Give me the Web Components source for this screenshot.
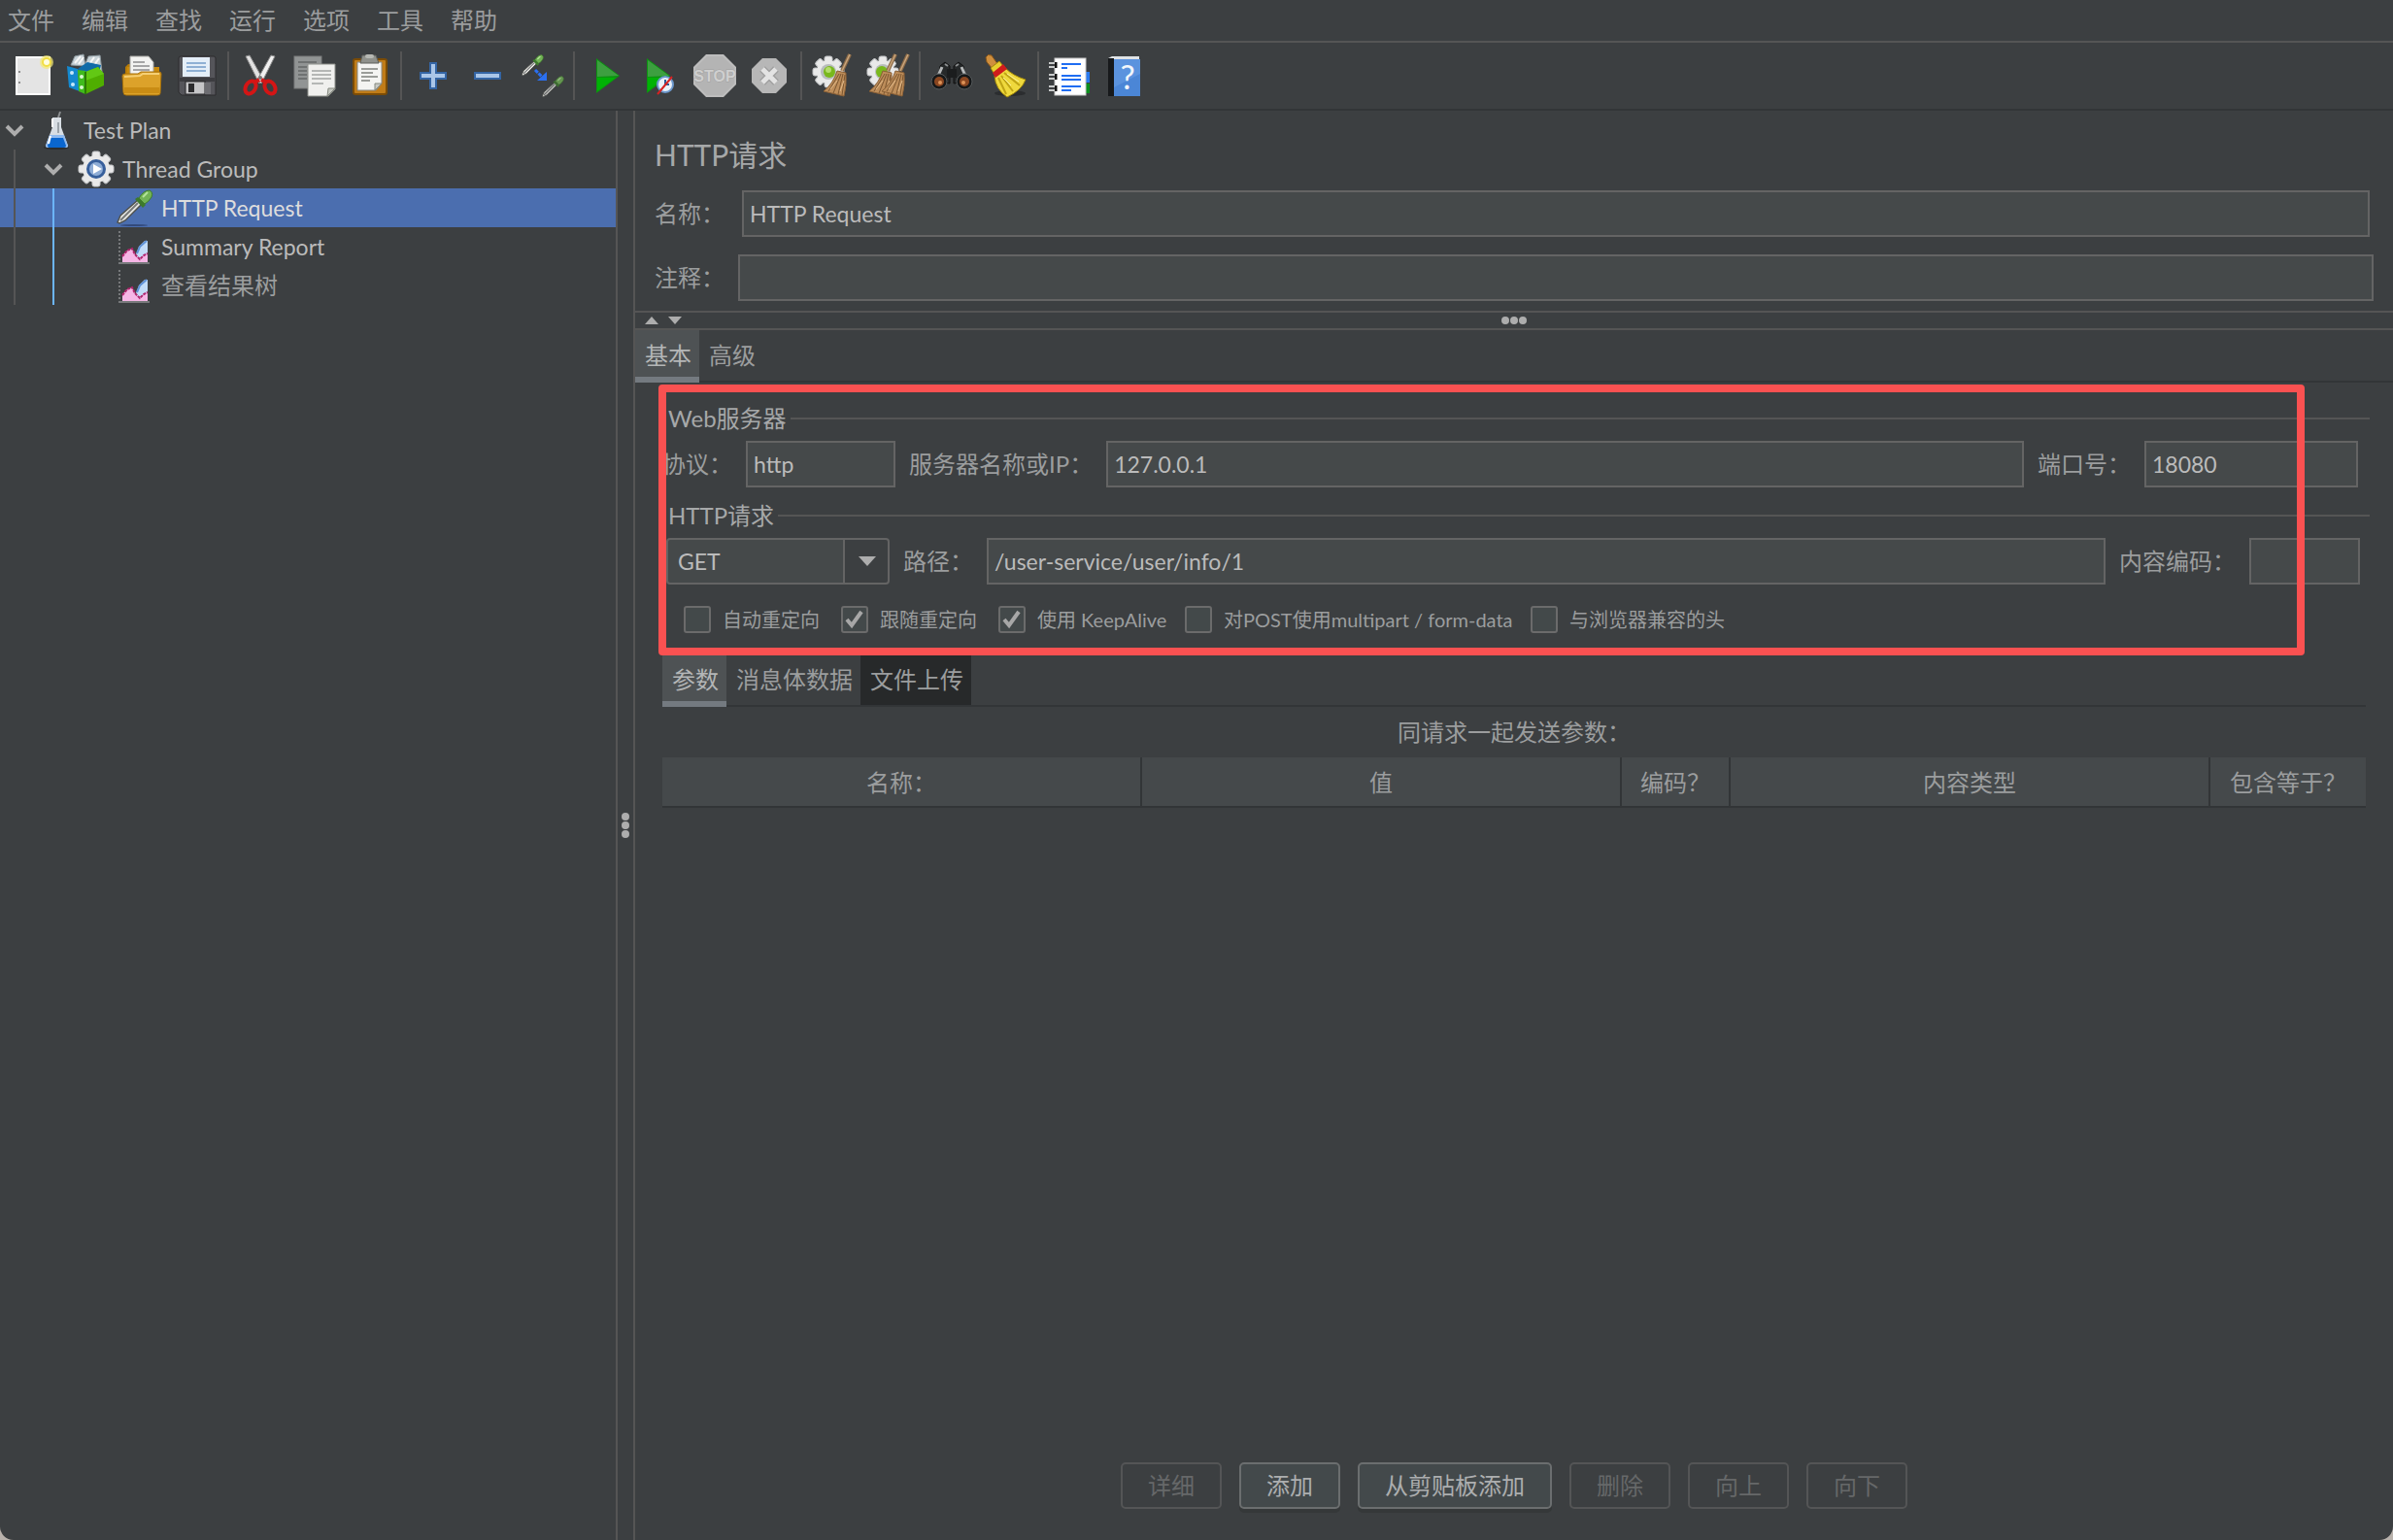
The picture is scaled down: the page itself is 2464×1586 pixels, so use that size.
<!DOCTYPE html>
<html lang="zh-CN">
<head>
<meta charset="utf-8">
<title>HTTP请求</title>
<style>
  html, body {
    margin: 0;
    height: 100%;
    background: #b9b2ac;
  }
  body {
    --bg: #3c3f41;
    --line: #555555;
    --dark-line: #323537;
    --field: #45494a;
    --field-border: #646464;
    --text: #bbbbbb;
    --cjk: #9b9d9e;
    font-family: Lato, "Noto Sans CJK SC", sans-serif;
    font-size: 24px;
    line-height: 32px;
    color: var(--cjk);
  }
</style>
</head>
<body>
<app-window>
  <menu-bar slot="menu" items='["文件","编辑","查找","运行","选项","工具","帮助"]'></menu-bar>
  <tool-bar slot="tools"></tool-bar>
  <test-tree slot="tree">
    <tree-row depth="0" icon="flask" open>Test Plan</tree-row>
    <tree-row depth="1" icon="gear" open>Thread Group</tree-row>
    <tree-row depth="2" icon="pipette" selected>HTTP Request</tree-row>
    <tree-row depth="2" icon="chart">Summary Report</tree-row>
    <tree-row depth="2" icon="chart" cjk>查看结果树</tree-row>
  </test-tree>
  <http-editor slot="editor"></http-editor>
</app-window>

<script>
const base = `
  :host, *, *:before, *:after { box-sizing: border-box; }
  button, input, select { font: inherit; color: inherit; margin: 0; }
  button { background: none; border: 0; padding: 0; }
`;

const pipette = (x, y, s) => `
  <g transform="translate(${x} ${y}) scale(${s})">
    <path d="M2 34 L5 27 L23 11 L27 15 L10 32 L4 35z" fill="#e8e8e4" stroke="#50524e" stroke-width="1.5"/>
    <path d="M5 32 L23 14" stroke="#77797a" stroke-width="2"/>
    <path d="M20 10 L23 8 L31 16 L28 19z" fill="#3d7a2c"/>
    <path d="M24 9 Q29 1 35 1 Q39 3 37 8 Q34 13 30 15z" fill="#72b356" stroke="#3f7d2b"/>
    <path d="M28 8 L33 3" stroke="#b4e39a" stroke-width="2"/>
  </g>`;

const gear = (cx, cy, r) => `
  <g fill="#e9e9e9" stroke="#c4c6c8" stroke-width="1">
    ${[0, 45, 90, 135].map(a => `<rect x="${cx - 4}" y="${cy - r}" width="8" height="${r * 2}" rx="2" transform="rotate(${a} ${cx} ${cy})"/>`).join('')}
    <circle cx="${cx}" cy="${cy}" r="${r - 4}" stroke="none"/>
  </g>`;

const broom = (x) => `
  <g transform="translate(${x} 0)">
    <path d="M39 0 L31 17" stroke="#8d6b48" stroke-width="4"/>
    <path d="M39 0 L31 17" stroke="#c9a57c" stroke-width="1.5"/>
    <path d="M26 17 L35 19 Q36 32 33 43 L12 38 Q22 30 26 17z" fill="#bd8d5a" stroke="#8a5f35"/>
    <path d="M28 20 L17 38 M30 20 L22 40 M32 20 L27 41 M34 21 L31 42" stroke="#7b5630" stroke-width="1"/>
    <path d="M26 27 L19 36 M33 27 L29 38" stroke="#e2bb8a" stroke-width="1"/>
  </g>`;

const icons = {
  create: `
    <rect x="5" y="3" width="34" height="38" fill="#e4e4e4" stroke="#ffffff" stroke-width="2"/>
    <path d="M8 17v2 M8 28v2" stroke="#8c8c8c" stroke-width="2"/>
    <circle cx="36" cy="8" r="7" fill="#f5ea75" opacity=".7"/>
    <circle cx="36" cy="8" r="4" fill="#fffde0" stroke="#f2df45" stroke-width="2"/>`,
  templates: `
    <path d="M5 11 L9 2 L18 0 L20 12z M19 12 L23 2 L35 1 L37 18z" fill="#c9d3d8" stroke="#8d999f"/>
    <path d="M9 9 L15 2 M13 10 L18 3 M24 10 L29 3 M29 11 L34 4" stroke="#f7f7f7" stroke-width="2"/>
    <path d="M1 12 L12 15 L14 38 L3 34z" fill="#1489cf"/>
    <path d="M12 15 L22 8 L36 11 L30 35 L14 38z" fill="#0f6ba8"/>
    <path d="M12 16 L20 17 L20 41 L13 38z" fill="#3fbb1c"/>
    <path d="M20 18 L33 13 L39 20 L39 32 L20 41z" fill="#4fae00"/>
    <path d="M20 18 L33 13 L39 20 L20 27z" fill="#62c814"/>
    <path d="M20 18 L20 41" stroke="#2c7a05" stroke-width="2"/>
    <circle cx="16" cy="23" r="2" fill="#d9f7cf"/><circle cx="16" cy="34" r="2" fill="#d9f7cf"/>
    <circle cx="6" cy="19" r="2" fill="#c6e6f8"/><circle cx="7" cy="31" r="2" fill="#c6e6f8"/>`,
  open: `
    <path d="M5 13 L8 10 L18 10 L18 20 L5 24z" fill="#b57a06"/>
    <path d="M7 13 H40 V40 H5z" fill="#c98a0c"/>
    <path d="M10 2 H29 L34 8 V26 H10z" fill="#f3f3f1" stroke="#a8a8a4"/>
    <path d="M13 8h12 M13 12h17 M13 16h17" stroke="#a6a6a6" stroke-width="2"/>
    <path d="M2 22 Q2 20 5 20 L18 20 L21 18 L40 18 Q42 18 42 20 L41 40 Q41 42 38 42 L6 42 Q3 42 3 39z" fill="#dca22a" stroke="#a87108"/>
    <path d="M4 23 L20 22 L23 20 L40 20" stroke="#f5cf74" stroke-width="2" fill="none"/>
    <path d="M4 34 H40 V40 H4z" fill="#c98c14"/>`,
  save: `
    <path d="M4 4 Q4 2 6 2 H40 Q42 2 42 4 V42 H7 L4 39z" fill="#55555a" stroke="#2c2c2e"/>
    <rect x="8" y="3" width="28" height="20" fill="#e4eef8"/>
    <path d="M12 9h20 M12 13h20 M12 17h20" stroke="#8fb0d4" stroke-width="2"/>
    <rect x="5" y="24" width="36" height="4" fill="#3c3c40"/>
    <rect x="11" y="28" width="20" height="13" fill="#c6c6c8" stroke="#242426"/>
    <rect x="14" y="30" width="6" height="9" fill="#2c2c2e"/>
    <rect x="31" y="29" width="6" height="12" fill="#6d6d72"/>`,
  cut: `
    <path d="M7 2 L11 1 L25 26 L21 30z" fill="#e2e2e2" stroke="#8b8b8b"/>
    <path d="M37 2 L33 1 L19 26 L23 30z" fill="#f1f1f1" stroke="#8b8b8b"/>
    <circle cx="22" cy="24" r="2" fill="#777"/>
    <ellipse cx="12" cy="34" rx="5" ry="7" transform="rotate(30 12 34)" fill="none" stroke="#d41515" stroke-width="4"/>
    <ellipse cx="32" cy="34" rx="5" ry="7" transform="rotate(-30 32 34)" fill="none" stroke="#d41515" stroke-width="4"/>
    <path d="M16 29 L21 26 M28 29 L23 26" stroke="#d41515" stroke-width="4"/>`,
  copy: `
    <rect x="1" y="2" width="28" height="33" fill="#919494" stroke="#7a7d7d"/>
    <path d="M5 8h19 M5 13h9 M5 17h9 M5 21h9 M5 25h9" stroke="#6f7272" stroke-width="2"/>
    <path d="M15 10 H43 V36 L36 43 H15z" fill="#f0f0ee" stroke="#8c8f8a"/>
    <path d="M19 17h20 M19 21h20 M19 25h20 M19 30h12" stroke="#b5b7b5" stroke-width="2"/>
    <path d="M43 35 L36 35 L35 43z" fill="#c5c8c1" stroke="#85887f"/>`,
  paste: `
    <rect x="6" y="5" width="34" height="36" rx="2" fill="#c07c18" stroke="#7c4c05" stroke-width="2"/>
    <path d="M10 8 H35 V30 L29 37 H10z" fill="#f4f4f2" stroke="#888a85"/>
    <path d="M15 1 H29 L32 9 H13z" fill="#8f918c" stroke="#5d5f5b"/>
    <rect x="18" y="0" width="9" height="4" rx="2" fill="#b6b8b3"/>
    <path d="M14 15h17 M14 19h12 M14 23h17 M14 27h9" stroke="#9b9d99" stroke-width="2"/>
    <path d="M35 30 L28 30 L28 37z" fill="#c8cac5" stroke="#85887f"/>`,
  plus: `
    <path d="M18 8 H26 V18 H36 V26 H26 V36 H18 V26 H8 V18 H18z" fill="#3465a4"/>
    <path d="M20 10 H24 V20 H34 V24 H24 V34 H20 V24 H10 V20 H20z" fill="#aac6e8"/>`,
  minus: `
    <rect x="8" y="18" width="28" height="8" fill="#3465a4"/>
    <rect x="10" y="20" width="24" height="4" fill="#aac6e8"/>`,
  toggle: `
    ${pipette(0, 0, 0.62)}
    <path d="M15 16 L22 23" stroke="#2a6ff0" stroke-width="3" stroke-dasharray="4 1"/>
    <path d="M27 18 V27 H17z" fill="#2a6ff0"/>
    <g opacity=".75">${pipette(21, 22, 0.62)}</g>`,
  start: `
    <path d="M12 4 L36 22 L12 40z" fill="#0c9410"/>
    <path d="M13 6 L35 22 L13 23z" fill="#3d9f40"/>
    <path d="M13 24 H32 L13 38z" fill="#00b205"/>`,
  startNow: `
    <path d="M8 4 L32 22 L8 40z" fill="#0c9410"/>
    <path d="M9 6 L31 22 L9 23z" fill="#3d9f40"/>
    <path d="M9 24 H26 L9 38z" fill="#00b205"/>
    <circle cx="27" cy="31" r="8" fill="#e9f0f8" stroke="#6c98cd" stroke-width="2"/>
    <path d="M27 26 V31 H31" stroke="#2c5d9a" stroke-width="2" fill="none"/>
    <path d="M19 41 L34 23" stroke="#d62222" stroke-width="2"/>`,
  stop: `
    <path d="M13 0 H31 L44 13 V31 L31 44 H13 L0 31 V13z" fill="#bdbdbd"/>
    <path d="M14 2 H30 L42 14 V30 L30 42 H14 L2 30 V14z" fill="#b4b4b4"/>
    <text x="22" y="28" font-size="16" font-weight="bold" font-family="Liberation Sans, sans-serif" text-anchor="middle" fill="#cfcfcf" stroke="#a2a2a2" stroke-width="1" paint-order="stroke">STOP</text>`,
  shutdown: `
    <path d="M15 4 H29 L40 15 V29 L29 40 H15 L4 29 V15z" fill="#b7b7b7"/>
    <path d="M15 15 L29 29 M29 15 L15 29" stroke="#a0a0a0" stroke-width="8"/>
    <path d="M15 15 L29 29 M29 15 L15 29" stroke="#e3e3e3" stroke-width="5"/>`,
  clear: `
    ${gear(17, 18, 16)}
    <circle cx="17" cy="18" r="8" fill="#b8bcbc"/><circle cx="18" cy="18" r="6" fill="#79b81c"/><circle cx="17" cy="16" r="3" fill="#b3dd6b"/>
    ${broom(0)}`,
  clearAll: `
    ${gear(17, 18, 16)}
    <circle cx="17" cy="18" r="8" fill="#b8bcbc"/><circle cx="16" cy="18" r="6" fill="#79b81c"/>
    ${broom(-9)}${broom(4)}`,
  search: `
    <path d="M10 12 L15 8 L20 12 L20 30 L8 28z M34 12 L29 8 L24 12 L24 30 L36 28z" fill="#26292a" stroke="#111"/>
    <path d="M17 15 H27 V24 H17z" fill="#1b1d1e"/>
    <path d="M12 13 L8 22 M32 13 L36 22" stroke="#b6b9ba" stroke-width="3"/>
    <path d="M15 10 L18 12 M29 10 L26 12" stroke="#8a8d8e" stroke-width="2"/>
    <circle cx="9" cy="28" r="8" fill="#161819" stroke="#555a5c"/>
    <circle cx="35" cy="28" r="8" fill="#161819" stroke="#555a5c"/>
    <circle cx="9" cy="28" r="5" fill="#8a4620"/><circle cx="35" cy="28" r="5" fill="#8a4620"/>
    <circle cx="10" cy="29" r="2" fill="#dc9257"/><circle cx="34" cy="29" r="2" fill="#dc9257"/>`,
  reset: `
    <ellipse cx="26" cy="40" rx="16" ry="3" fill="#2b2d2f"/>
    <path d="M1 3 Q3 -1 7 1 L14 11 L8 15 L2 8z" fill="#cf8f3e" stroke="#84541a"/>
    <path d="M6 14 L15 7 L19 12 L9 19z" fill="#e8cf2e" stroke="#a38708"/>
    <path d="M21 14 Q29 22 42 26 Q38 37 23 44 Q11 36 10 22z" fill="#efd93d" stroke="#a58a08"/>
    <path d="M8 19 L19 10 L23 15 L11 24z" fill="#cf1c1c"/>
    <path d="M14 24 L22 41 M17 22 L29 38 M20 19 L36 32" stroke="#bfa415" stroke-width="2"/>
    <path d="M19 24 L27 32 M23 20 L35 28" stroke="#fbf3a0" stroke-width="1"/>`,
  functions: `
    <path d="M36 18 H42 V29 H36z" fill="#2a7bf0"/><path d="M36 30 H42 V40 H36z" fill="#0a8f1c"/>
    <rect x="6" y="4" width="32" height="38" fill="#ffffff" stroke="#c8c8c8"/>
    <path d="M13 10h20 M13 22h20 M13 26h20 M13 33h20" stroke="#1f6df2" stroke-width="2"/>
    <path d="M13 14h6 M13 37h10" stroke="#1f6df2" stroke-width="2"/>
    <path d="M7 8v6 M7 20v6 M7 32v6" stroke="#111" stroke-width="3"/>
    <path d="M0 9h6 M0 13h6 M0 21h6 M0 25h6 M0 33h6 M0 37h6" stroke="#c9cbcb" stroke-width="2"/>`,
  help: `
    <path d="M5 4 L9 2 H37 L37 6 H9z" fill="#dfe3e6"/>
    <rect x="5" y="4" width="6" height="39" fill="#17191b"/>
    <rect x="11" y="5" width="27" height="38" fill="#4b86d6"/>
    <path d="M11 5 L38 5 L38 20 L11 34z" fill="#5b93de"/>
    <text x="25" y="36" font-size="34" font-family="Lato, sans-serif" text-anchor="middle" fill="#f2f6fb">?</text>`,
  flask: `
    <ellipse cx="22" cy="38" rx="13" ry="2" fill="#2b2d2f"/>
    <path d="M24 7 L26 1" stroke="#8c8f91" stroke-width="2"/>
    <path d="M18 7 H27 V17 L34 36 Q34 38 31 38 H14 Q11 38 11 36 L18 17z" fill="#d8dee4"/>
    <path d="M15 25 H30 L34 36 Q34 38 31 38 H14 Q11 38 11 36z" fill="#8fb9ee"/>
    <path d="M16 28 H29 L32 36 Q32 38 30 38 H16 Q13 38 13 36z" fill="#0a66cf"/>
    <path d="M18 8 V17 M16 26 L14 34" stroke="#ffffff" stroke-width="2"/>
    <path d="M24 12 V23" stroke="#9ba3aa" stroke-width="2"/>`,
  gear: `
    ${gear(23, 20, 18)}
    <circle cx="23" cy="20" r="10" fill="#375f9b"/>
    <circle cx="23" cy="20" r="7" fill="#8fadd6"/>
    <path d="M20 15 L29 20 L20 25z" fill="#ffffff"/>`,
  pipette: `
    <ellipse cx="22" cy="38" rx="14" ry="1" fill="#32497a"/>
    ${pipette(3, 1, 1)}`,
  chart: `
    <path d="M7 4 V37" stroke="#77797b" stroke-width="2" stroke-dasharray="2 2"/>
    <path d="M6 37 H38" stroke="#77797b" stroke-width="2"/>
    <path d="M24 36 V28 L27 20 L33 14 H36 V36z" fill="#c2dcf8"/>
    <path d="M25 27 L28 20 L35 14" stroke="#5f92d8" stroke-width="2" fill="none"/>
    <path d="M10 36 V29 L15 24 L20 22 L23 28 L28 33 L32 29 L36 27 V36z" fill="#f6b6e6"/>
    <path d="M10 30 L15 24 L20 22 L23 28 L28 33 L32 29 L36 27" stroke="#b0256d" stroke-width="2" stroke-dasharray="3 1" fill="none"/>`
};

class AppWindow extends HTMLElement {
  constructor() {
    super();
    this.attachShadow({ mode: 'open' });
  }
  connectedCallback() {
    this.shadowRoot.innerHTML = `
      <style>
      ${base}
      :host {
        display: flex;
        flex-direction: column;
        min-height: 100vh;
        background: var(--bg);
        border-radius: 0 0 14px 14px;
        overflow: hidden;
      }
      .body {
        flex: 1;
        display: grid;
        grid-template-columns: 634px 20px minmax(0, 1fr);
      }
      .divider {
        border: solid var(--line);
        border-width: 0 2px;
        display: flex;
        align-items: center;
        justify-content: center;
      }
      </style>
      <slot name="menu"></slot>
      <slot name="tools"></slot>
      <div class="body">
        <slot name="tree"></slot>
        <div class="divider"><grip-dots vertical></grip-dots></div>
        <slot name="editor"></slot>
      </div>`;
  }
}

class GripDots extends HTMLElement {
  constructor() {
    super();
    this.attachShadow({ mode: 'open' });
    this.shadowRoot.innerHTML = `
      <style>
      :host { display: flex; gap: 1px; }
      :host([vertical]) { flex-direction: column; }
      i { width: 8px; height: 8px; border-radius: 50%; background: #adadad; }
      </style>
      <i></i><i></i><i></i>`;
  }
}

class MenuBar extends HTMLElement {
  constructor() {
    super();
    this.attachShadow({ mode: 'open' });
  }
  connectedCallback() {
    const items = JSON.parse(this.getAttribute('items'));
    this.shadowRoot.innerHTML = `
      <style>
      ${base}
      :host {
        display: flex;
        height: 44px;
        padding-left: 8px;
        gap: 28px;
        border-bottom: 2px solid var(--line);
      }
      </style>
      ${items.map(item => `<button>${item}</button>`).join('')}`;
  }
}

class ToolBar extends HTMLElement {
  constructor() {
    super();
    this.attachShadow({ mode: 'open' });
  }
  get groups() {
    return [
      ['create', 'templates', 'open', 'save'],
      ['cut', 'copy', 'paste'],
      ['plus', 'minus', 'toggle'],
      ['start', 'startNow', 'stop', 'shutdown'],
      ['clear', 'clearAll'],
      ['search', 'reset'],
      ['functions', 'help']
    ];
  }
  connectedCallback() {
    this.shadowRoot.innerHTML = `
      <style>
      ${base}
      :host {
        display: flex;
        align-items: center;
        height: 70px;
        padding-left: 6px;
        border-bottom: 2px solid var(--dark-line);
      }
      button { width: 56px; height: 44px; }
      svg { display: block; margin: 0 auto; overflow: visible; }
      hr { width: 2px; height: 50px; margin: 0 4px; border: 0; background: var(--line); }
      </style>
      ${this.groups.map(group => group.map(name =>
        `<button aria-label="${name}"><svg width="44" height="44" viewBox="0 0 44 44" fill="none">${icons[name]}</svg></button>`
      ).join('')).join('<hr>')}`;
  }
}

class TestTree extends HTMLElement {
  constructor() {
    super();
    this.attachShadow({ mode: 'open' });
    this.shadowRoot.innerHTML = `<style>:host { display: block; }</style><slot></slot>`;
  }
}

class TreeRow extends HTMLElement {
  constructor() {
    super();
    this.attachShadow({ mode: 'open' });
  }
  connectedCallback() {
    const depth = parseInt(this.getAttribute('depth'));
    const guides = ['grey', 'blue'].slice(0, depth).map(name => `<i class="guide ${name}"></i>`).join('');
    this.shadowRoot.innerHTML = `
      <style>
      ${base}
      :host {
        display: flex;
        align-items: center;
        height: 40px;
        font-size: 23px;
        color: var(--text);
      }
      :host([cjk]) { font-size: 24px; color: var(--cjk); }
      :host([selected]) { background: #4b6eaf; color: #dddddd; }
      .guide { width: 40px; height: 40px; background: linear-gradient(var(--guide), var(--guide)) 14px 0 / 2px 100% no-repeat; }
      .grey { --guide: var(--line); }
      .blue { --guide: #6cb5fb; }
      .twist { width: 30px; height: 40px; margin-right: 6px; }
      .icon { margin-right: 6px; }
      </style>
      ${guides}
      <svg class="twist" viewBox="0 0 30 40" fill="none">
        ${this.hasAttribute('open') ? '<path d="M7 16 L15 24 L23 16" stroke="#adadad" stroke-width="4"/>' : ''}
      </svg>
      <svg class="icon" width="44" height="40" viewBox="0 0 44 40" fill="none">${icons[this.getAttribute('icon')]}</svg>
      <slot></slot>`;
  }
}

class TabStrip extends HTMLElement {
  constructor() {
    super();
    this.attachShadow({ mode: 'open' });
  }
  connectedCallback() {
    const tabs = JSON.parse(this.getAttribute('tabs'));
    const hover = this.getAttribute('hover');
    this.shadowRoot.innerHTML = `
      <style>
      ${base}
      :host {
        display: flex;
        height: 54px;
        background: linear-gradient(var(--dark-line), var(--dark-line)) 0 100% / 100% 2px no-repeat;
      }
      button { padding: 0 8px 0 10px; height: 52px; }
      .active { height: 54px; padding-top: 4px; background: #4e5254; border-bottom: 6px solid #747a80; color: #b4b6b7; }
      .hover { background: #27292a; }
      </style>
      ${tabs.map((tab, i) => `<button role="tab" class="${i === 0 ? 'active' : ''} ${tab === hover ? 'hover' : ''}">${tab}</button>`).join('')}`;
  }
}

class CheckOption extends HTMLElement {
  constructor() {
    super();
    this.attachShadow({ mode: 'open' });
  }
  connectedCallback() {
    this.shadowRoot.innerHTML = `
      <style>
      ${base}
      :host { display: block; font-size: 20px; line-height: 28px; }
      label { display: flex; gap: 12px; white-space: nowrap; }
      .box { display: grid; }
      .box > * { grid-area: 1 / 1; width: 28px; height: 28px; }
      input { appearance: none; border: 2px solid #6b6b6b; border-radius: 3px; background: #43494a; }
      svg { display: none; pointer-events: none; }
      input:checked + svg { display: block; }
      </style>
      <label>
        <span class="box">
          <input type="checkbox" ${this.hasAttribute('checked') ? 'checked' : ''}>
          <svg viewBox="0 0 28 28" fill="none"><path d="M6 14 L11 20 L21 6" stroke="#a7a7a7" stroke-width="4"/></svg>
        </span>
        <slot></slot>
      </label>`;
  }
}

class GroupTitle extends HTMLElement {
  constructor() {
    super();
    this.attachShadow({ mode: 'open' });
    this.shadowRoot.innerHTML = `
      <style>
      ${base}
      :host { display: flex; align-items: center; gap: 4px; height: 32px; padding: 0 24px 0 34px; color: #a6a8a9; }
      i { flex: 1; height: 2px; background: var(--line); }
      </style>
      <slot></slot><i></i>`;
  }
}

class ParamTable extends HTMLElement {
  constructor() {
    super();
    this.attachShadow({ mode: 'open' });
    this.shadowRoot.innerHTML = `
      <style>
      ${base}
      :host { display: block; }
      table { width: 100%; table-layout: fixed; border-collapse: separate; border-spacing: 0; }
      caption { height: 52px; line-height: 52px; }
      th {
        height: 52px;
        padding: 2px 0 0;
        font-weight: normal;
        background: #45494b;
        border-bottom: 2px solid var(--dark-line);
        border-right: 2px solid var(--dark-line);
      }
      th:last-child { border-right: 0; }
      .encode { width: 112px; }
      .equals { width: 160px; }
      </style>
      <table>
        <caption>同请求一起发送参数：</caption>
        <thead>
          <tr><th>名称：</th><th>值</th><th class="encode">编码？</th><th>内容类型</th><th class="equals">包含等于？</th></tr>
        </thead>
        <tbody></tbody>
      </table>`;
  }
}

class ActionButton extends HTMLElement {
  constructor() {
    super();
    this.attachShadow({ mode: 'open' });
  }
  connectedCallback() {
    this.shadowRoot.innerHTML = `
      <style>
      ${base}
      :host { display: block; }
      button {
        display: block;
        height: 48px;
        padding: 0 26px;
        border: 2px solid #6b6e6f;
        border-radius: 5px;
        background: #43494b;
        color: #acaeaf;
        box-shadow: 0 4px 0 #353839;
      }
      button:disabled { background: none; box-shadow: none; border-color: #545556; color: #666869; }
      </style>
      <button ${this.hasAttribute('disabled') ? 'disabled' : ''}><slot></slot></button>`;
  }
}

class HttpEditor extends HTMLElement {
  constructor() {
    super();
    this.attachShadow({ mode: 'open' });
  }
  connectedCallback() {
    this.shadowRoot.innerHTML = `
      <style>
      ${base}
      :host { display: flex; flex-direction: column; min-width: 0; }
      h1 {
        margin: 20px 0 12px;
        padding-left: 20px;
        font-size: 30px;
        font-weight: normal;
        line-height: 50px;
        color: #a6a8a9;
      }
      .row { display: flex; align-items: center; gap: 14px; white-space: nowrap; }
      .name { gap: 18px; padding: 0 24px 0 20px; margin-bottom: 18px; }
      .comment { padding: 0 20px; margin-bottom: 10px; }
      input {
        height: 48px;
        min-width: 0;
        padding: 0 6px;
        font-size: 23px;
        color: var(--text);
        background: var(--field);
        border: 2px solid var(--field-border);
        border-radius: 0;
      }
      .grow { flex: 1; }
      .split {
        display: grid;
        grid-template-columns: 1fr auto 1fr;
        align-items: center;
        height: 20px;
        padding: 0 10px;
        border: solid var(--line);
        border-width: 2px 0;
      }
      .arrows { display: block; }
      .form { position: relative; padding-top: 21px; }
      .server { padding: 0 36px 0 28px; margin: 7px 0 13px; }
      .path { padding: 0 34px 0 32px; margin: 7px 0 22px; }
      .protocol { width: 154px; }
      .port { width: 220px; }
      .encoding { width: 114px; }
      .combo { display: grid; width: 230px; }
      .combo > * { grid-area: 1 / 1; }
      select {
        appearance: none;
        height: 48px;
        padding: 0 10px;
        font-size: 23px;
        color: var(--text);
        border: 2px solid var(--field-border);
        border-radius: 4px;
        background: linear-gradient(90deg, var(--field-border) 2px, var(--bg) 2px) 100% 0 / 46px 100% no-repeat var(--field);
      }
      .combo svg { justify-self: end; align-self: center; margin-right: 14px; pointer-events: none; }
      .checks {
        display: grid;
        grid-template-columns: 162px 162px 192px 356px auto;
        padding-left: 50px;
        margin-bottom: 22px;
      }
      .highlight {
        position: absolute;
        top: 2px;
        left: 24px;
        right: 91px;
        bottom: -1px;
        border: 8px solid #fa5151;
        border-radius: 4px;
        pointer-events: none;
        z-index: 1;
      }
      .params { flex: 1; margin: 0 28px; }
      .actions { display: flex; justify-content: center; gap: 18px; padding-bottom: 32px; }
      </style>
      <h1>HTTP请求</h1>
      <div class="row name"><label for="name">名称：</label><input id="name" class="grow" value="HTTP Request"></div>
      <div class="row comment"><label for="comment">注释：</label><input id="comment" class="grow"></div>
      <div class="split">
        <svg class="arrows" width="40" height="8" viewBox="0 0 40 8" fill="#adadad"><path d="M0 8 L7 0 L14 8z"/><path d="M24 0 H38 L31 8z"/></svg>
        <grip-dots></grip-dots>
      </div>
      <tab-strip tabs='["基本","高级"]'></tab-strip>
      <div class="form">
        <group-title>Web服务器</group-title>
        <div class="row server">
          <label for="protocol">协议：</label><input id="protocol" class="protocol" value="http">
          <label for="server">服务器名称或IP：</label><input id="server" class="grow" value="127.0.0.1">
          <label for="port">端口号：</label><input id="port" class="port" value="18080">
        </div>
        <group-title>HTTP请求</group-title>
        <div class="row path">
          <div class="combo">
            <select aria-label="HTTP请求"><option>GET</option></select>
            <svg width="18" height="10" viewBox="0 0 18 10" fill="#adadad"><path d="M0 0 H18 L9 10z"/></svg>
          </div>
          <label for="path">路径：</label><input id="path" class="grow" value="/user-service/user/info/1">
          <label for="encoding">内容编码：</label><input id="encoding" class="encoding">
        </div>
        <div class="checks">
          <check-option>自动重定向</check-option>
          <check-option checked>跟随重定向</check-option>
          <check-option checked>使用 KeepAlive</check-option>
          <check-option>对POST使用multipart / form-data</check-option>
          <check-option>与浏览器兼容的头</check-option>
        </div>
        <div class="highlight"></div>
      </div>
      <div class="params">
        <tab-strip tabs='["参数","消息体数据","文件上传"]' hover="文件上传"></tab-strip>
        <param-table></param-table>
      </div>
      <div class="actions">
        <action-button disabled>详细</action-button>
        <action-button>添加</action-button>
        <action-button>从剪贴板添加</action-button>
        <action-button disabled>删除</action-button>
        <action-button disabled>向上</action-button>
        <action-button disabled>向下</action-button>
      </div>`;
  }
}

window.customElements.define('grip-dots', GripDots);
window.customElements.define('menu-bar', MenuBar);
window.customElements.define('tool-bar', ToolBar);
window.customElements.define('tree-row', TreeRow);
window.customElements.define('test-tree', TestTree);
window.customElements.define('tab-strip', TabStrip);
window.customElements.define('check-option', CheckOption);
window.customElements.define('group-title', GroupTitle);
window.customElements.define('param-table', ParamTable);
window.customElements.define('action-button', ActionButton);
window.customElements.define('http-editor', HttpEditor);
window.customElements.define('app-window', AppWindow);
</script>
</body>
</html>
